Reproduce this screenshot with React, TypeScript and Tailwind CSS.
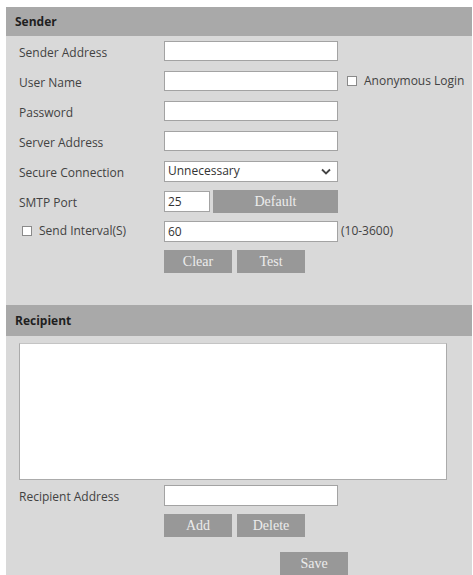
import { ReactNode } from 'react';

const labelCls = 'text-[12px] text-[#424242]';
const inputCls =
  'h-[20px] border border-[#a3a3a3] bg-white px-[3px] text-[12px] leading-[18px] text-[#333]';
const btnCls =
  'flex h-[23px] w-[68px] items-center justify-center bg-[#989898] text-[14px] text-[#ececec] [font-family:"Liberation_Serif",serif]';

function Checkbox() {
  return <span className="inline-block h-[10px] w-[10px] border border-[#8a8a8a] bg-white" />;
}

function Row({ label, children }: { label: ReactNode; children: ReactNode }) {
  return (
    <div className="flex h-[30px] items-center">
      <div className="w-[145px] shrink-0">{label}</div>
      {children}
    </div>
  );
}

function Btn({ children, className = '' }: { children: ReactNode; className?: string }) {
  return <div className={`${btnCls} ${className}`}>{children}</div>;
}

export default function App() {
  return (
    <div className="h-[575px] overflow-hidden bg-white pl-[6px] pt-[7px] [font-family:'Open_Sans',sans-serif]">
      <div className="h-[568px] w-[466px] bg-[#d9d9d9]">
        {/* Sender */}
        <div className="flex h-[29px] items-center bg-[#a9a9a9] pl-[9px] text-[12px] font-bold text-[#1f1f1f]">
          Sender
        </div>
        <div className="pl-[13px]">
          <Row label={<span className={labelCls}>Sender Address</span>}>
            <input className={`${inputCls} w-[174px]`} />
          </Row>
          <Row label={<span className={labelCls}>User Name</span>}>
            <input className={`${inputCls} w-[174px]`} />
            <div className="ml-[9px] flex items-center gap-[7px]">
              <Checkbox />
              <span className={labelCls}>Anonymous Login</span>
            </div>
          </Row>
          <Row label={<span className={labelCls}>Password</span>}>
            <input className={`${inputCls} w-[174px]`} />
          </Row>
          <Row label={<span className={labelCls}>Server Address</span>}>
            <input className={`${inputCls} w-[174px]`} />
          </Row>
          <Row label={<span className={labelCls}>Secure Connection</span>}>
            <div className="flex h-[21px] w-[174px] items-center justify-between border border-[#a3a3a3] bg-white pl-[3px] pr-[6px] text-[12px] text-[#333]">
              <span>Unnecessary</span>
              <svg width="10" height="7" viewBox="0 0 10 7" fill="none">
                <path d="M1 1.5 L5 5.5 L9 1.5" stroke="#444" strokeWidth="1.8" />
              </svg>
            </div>
          </Row>
          <Row label={<span className={labelCls}>SMTP Port</span>}>
            <input className={`${inputCls} h-[21px] w-[46px]`} defaultValue="25" />
            <Btn className="ml-[3px] h-[22px] w-[125px]">Default</Btn>
          </Row>
          <Row
            label={
              <div className="flex items-center gap-[7px] pl-[3px]">
                <Checkbox />
                <span className={labelCls}>Send Interval(S)</span>
              </div>
            }
          >
            <input className={`${inputCls} h-[21px] w-[174px]`} defaultValue="60" />
            <span className={`${labelCls} ml-[3px]`}>(10-3600)</span>
          </Row>
          <div className="ml-[145px] mt-[4px] flex gap-[5px]">
            <Btn>Clear</Btn>
            <Btn className="w-[67px]">Test</Btn>
          </div>
        </div>

        {/* Recipient */}
        <div className="mt-[32px] flex h-[31px] items-center bg-[#a9a9a9] pl-[9px] text-[12px] font-bold text-[#1f1f1f]">
          Recipient
        </div>
        <div className="pl-[13px]">
          <div className="mt-[7px] h-[137px] w-[428px] border border-[#ababab] border-t-[#c4c4c4] bg-white" />
          <Row label={<span className={labelCls}>Recipient Address</span>}>
            <input className={`${inputCls} h-[21px] w-[174px]`} />
          </Row>
          <div className="ml-[145px] mt-[4px] flex gap-[5px]">
            <Btn>Add</Btn>
            <Btn className="w-[67px]">Delete</Btn>
          </div>
          <div className="ml-[261px] mt-[15px] flex">
            <Btn>Save</Btn>
          </div>
        </div>
      </div>
    </div>
  );
}
